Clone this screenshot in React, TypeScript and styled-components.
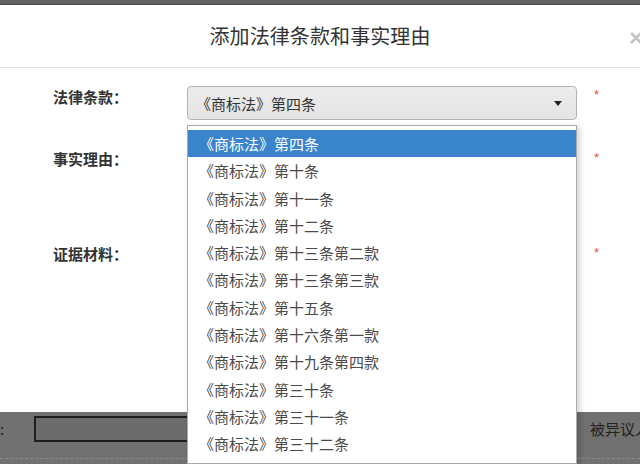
import styled, { createGlobalStyle } from "styled-components";

const GlobalStyle = createGlobalStyle`
  html, body {
    margin: 0;
    padding: 0;
    width: 640px;
    height: 464px;
    overflow: hidden;
    background: #717171;
    font-family: "Noto Sans CJK SC", "Noto Sans", sans-serif;
  }
`;

const Page = styled.div`
  position: relative;
  width: 640px;
  height: 464px;
  overflow: hidden;
  display: flex;
  flex-direction: column;
`;

const TopStrip = styled.div`
  height: 5px;
  background: #626262;
  border-bottom: 1px solid #4c4c4c;
  box-sizing: border-box;
`;

const Modal = styled.div`
  height: 407px;
  background: #fff;
  display: flex;
  flex-direction: column;
`;

const Header = styled.div`
  position: relative;
  height: 63px;
  border-bottom: 1px solid #e3e3e3;
  display: flex;
  align-items: center;
  justify-content: center;
  box-sizing: border-box;
`;

const Title = styled.h4`
  margin: 0 0 2px;
  font-size: 20px;
  font-weight: 400;
  color: #333;
  letter-spacing: 0.1px;
`;

const Close = styled.span`
  position: absolute;
  left: 629px;
  top: 19px;
  font-size: 24px;
  font-weight: 700;
  color: #c4c4c4;
  font-family: "Liberation Sans", sans-serif;
`;

const Body = styled.div`
  padding: 18px 0 0 53px;
  display: flex;
  flex-direction: column;
`;

const Row = styled.div<{ $h: number }>`
  height: ${(p) => p.$h}px;
  display: grid;
  grid-template-columns: 134px 390px 20px;
  align-items: start;
`;

const Label = styled.label`
  font-size: 15px;
  line-height: 22px;
  font-weight: 700;
  color: #333;
`;

const Star = styled.span<{ $top: number }>`
  margin: ${(p) => p.$top}px 0 0 17px;
  font-size: 13px;
  line-height: 12px;
  color: #d9534f;
  font-family: "Liberation Sans", sans-serif;
`;

const Select = styled.div`
  height: 34px;
  box-sizing: border-box;
  border: 1px solid #b3b3b3;
  border-radius: 4px;
  background: linear-gradient(#ececec, #e4e4e4);
  display: flex;
  align-items: center;
  justify-content: space-between;
  padding: 0 14px 0 8px;
  font-size: 15px;
  color: #333;
`;

const Caret = styled.span`
  width: 0;
  height: 0;
  border-left: 4px solid transparent;
  border-right: 4px solid transparent;
  border-top: 5px solid #222;
`;

const Below = styled.div`
  flex: 1;
  display: flex;
  align-items: flex-start;
  padding-top: 4px;
  border-bottom: 1px dashed #8a8a8a;
  margin-bottom: 5px;
  box-sizing: border-box;
  font-size: 15px;
  color: #1f1f1f;
`;

const Colon = styled.span`
  width: 34px;
  line-height: 26px;
`;

const HiddenInput = styled.div`
  width: 260px;
  height: 26px;
  box-sizing: border-box;
  border: 2px solid #1e1e1e;
  background: #6c6c6c;
`;

const Opposed = styled.span`
  margin-left: auto;
  margin-right: -10px;
  line-height: 26px;
  color: #222;
`;

const Dropdown = styled.ul`
  position: absolute;
  left: 187px;
  top: 125px;
  width: 390px;
  margin: 0;
  padding: 4px 0 5px;
  list-style: none;
  box-sizing: border-box;
  background: #fff;
  border: 1px solid #a9a9a9;
  box-shadow: 3px 2px 6px rgba(0, 0, 0, 0.18);
`;

const Option = styled.li<{ $active?: boolean }>`
  height: 27.3px;
  line-height: 27.3px;
  padding-left: 11px;
  font-size: 15px;
  color: ${(p) => (p.$active ? "#fff" : "#4a4a4a")};
  background: ${(p) => (p.$active ? "#3a84cb" : "transparent")};
`;

const options = [
  "《商标法》第四条",
  "《商标法》第十条",
  "《商标法》第十一条",
  "《商标法》第十二条",
  "《商标法》第十三条第二款",
  "《商标法》第十三条第三款",
  "《商标法》第十五条",
  "《商标法》第十六条第一款",
  "《商标法》第十九条第四款",
  "《商标法》第三十条",
  "《商标法》第三十一条",
  "《商标法》第三十二条",
];

export default function App() {
  return (
    <Page>
      <GlobalStyle />
      <TopStrip />
      <Modal>
        <Header>
          <Title>添加法律条款和事实理由</Title>
          <Close>×</Close>
        </Header>
        <Body>
          <Row $h={62}>
            <Label>法律条款：</Label>
            <Select>
              <span>《商标法》第四条</span>
              <Caret />
            </Select>
            <Star $top={3}>*</Star>
          </Row>
          <Row $h={95}>
            <Label>事实理由：</Label>
            <div />
            <Star $top={4}>*</Star>
          </Row>
          <Row $h={60}>
            <Label>证据材料：</Label>
            <div />
            <Star $top={4}>*</Star>
          </Row>
        </Body>
      </Modal>
      <Below>
        <Colon>:</Colon>
        <HiddenInput />
        <Opposed>被异议人</Opposed>
      </Below>
      <Dropdown>
        {options.map((o, i) => (
          <Option key={o} $active={i === 0}>
            {o}
          </Option>
        ))}
      </Dropdown>
    </Page>
  );
}
